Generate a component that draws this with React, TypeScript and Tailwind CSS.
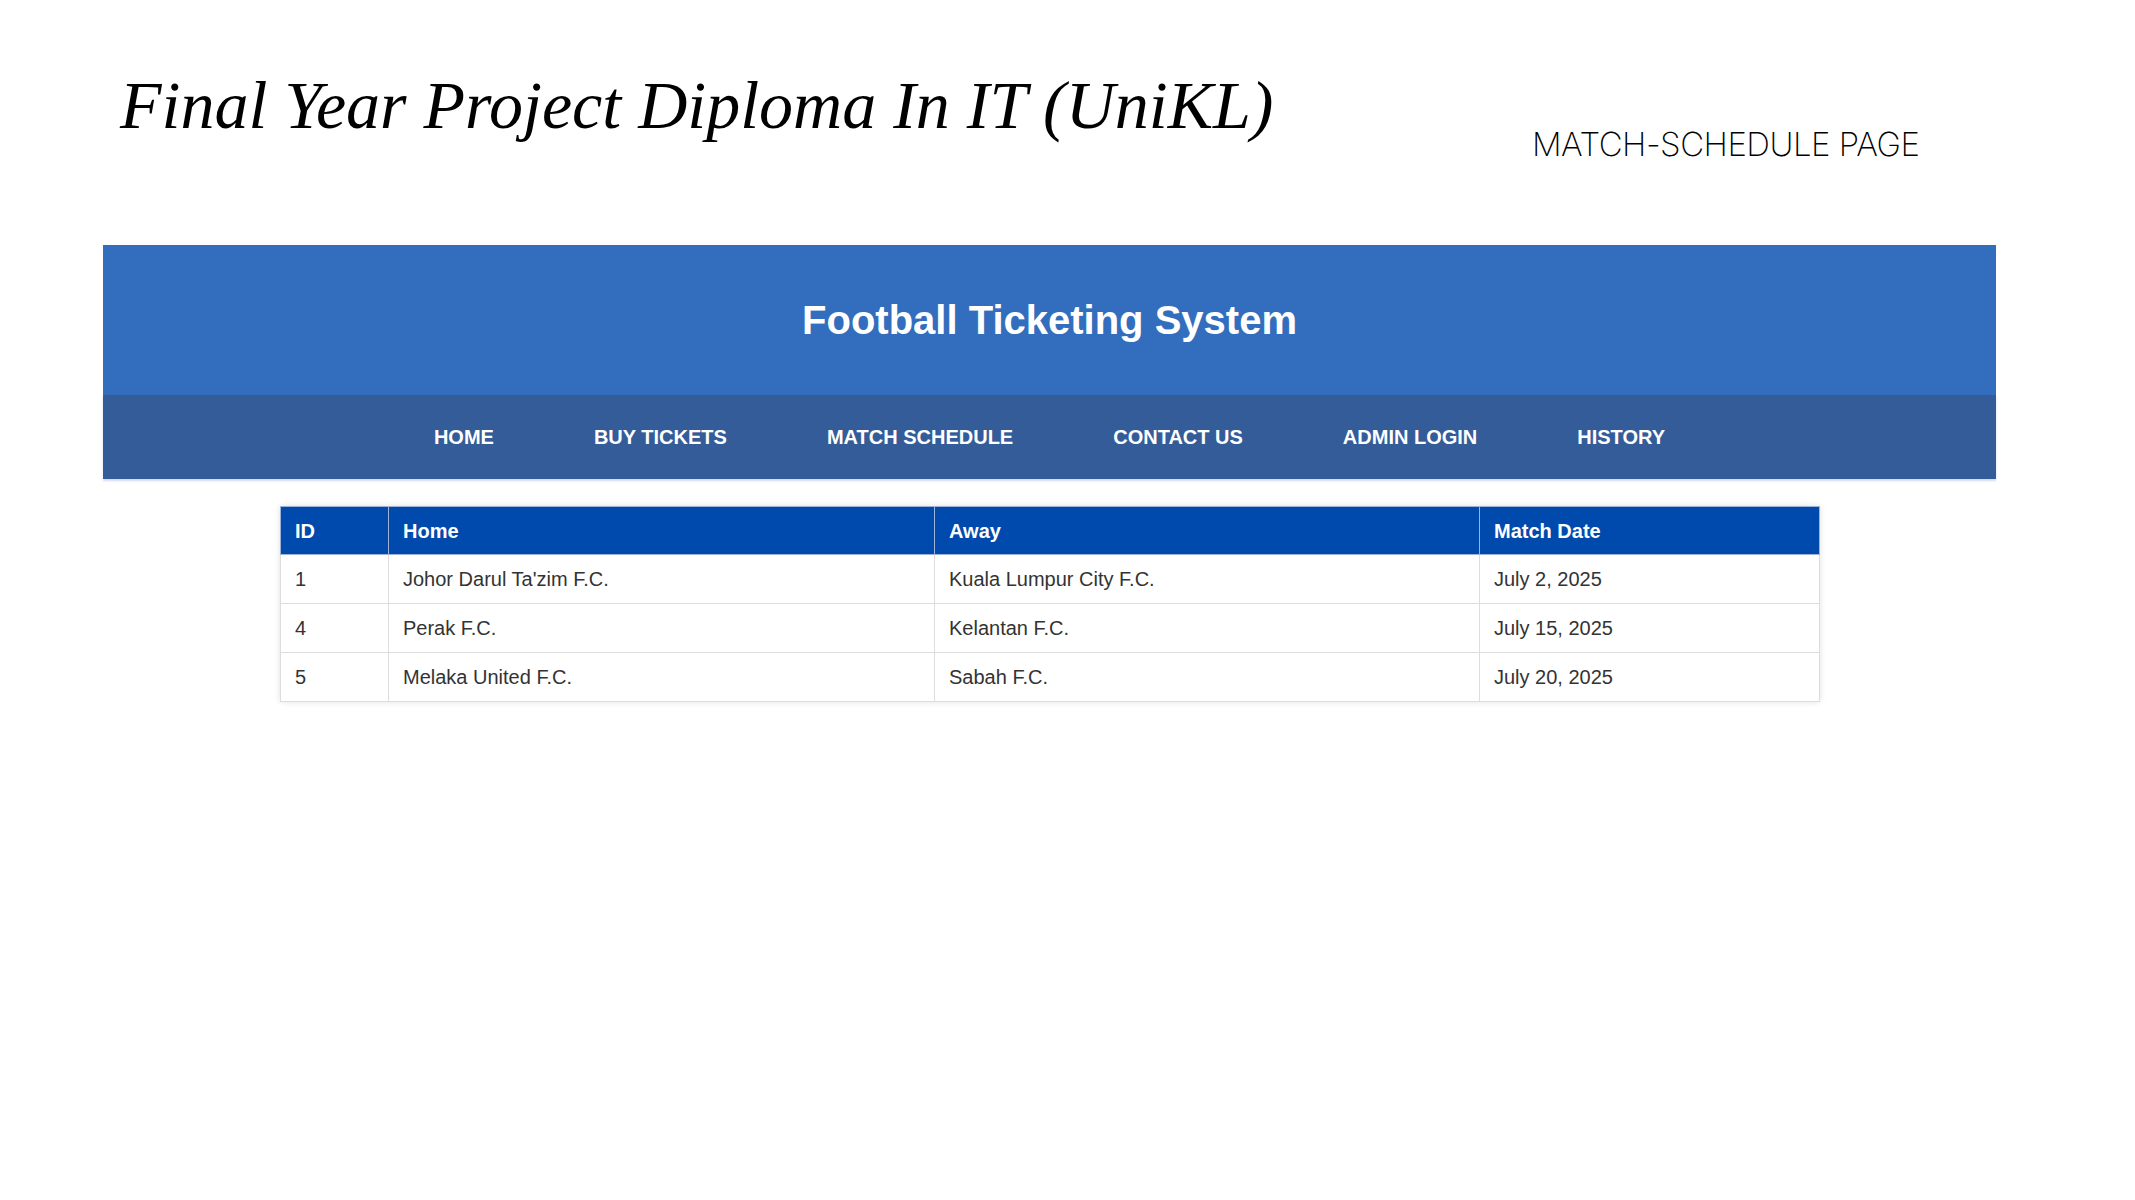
export default function App() {
  const navItems = ["HOME", "BUY TICKETS", "MATCH SCHEDULE", "CONTACT US", "ADMIN LOGIN", "HISTORY"];

  const matches = [
    { id: 1, home: "Johor Darul Ta'zim F.C.", away: "Kuala Lumpur City F.C.", date: "July 2, 2025" },
    { id: 4, home: "Perak F.C.", away: "Kelantan F.C.", date: "July 15, 2025" },
    { id: 5, home: "Melaka United F.C.", away: "Sabah F.C.", date: "July 20, 2025" },
  ];

  return (
    <div className="w-[2135px] h-[1200px] bg-white overflow-hidden">
      {/* Slide heading */}
      <div className="flex h-[245px] pl-[120px] pt-[71px]">
        <div className="w-[1412px]">
          <h1 className="font-['Liberation_Serif',serif] italic text-[68px] leading-[68px] text-black whitespace-nowrap">
            Final Year Project Diploma In IT (UniKL)
          </h1>
        </div>
        <div className="mt-[57px] font-['Inter',sans-serif] font-extralight text-[33px] leading-[33px] text-black whitespace-nowrap tracking-[-0.5px]">
          MATCH-SCHEDULE PAGE
        </div>
      </div>

      {/* Site header */}
      <div className="ml-[103px] w-[1893px] font-['Liberation_Sans',Arial,sans-serif]">
        <div className="h-[150px] bg-[#326ebd] flex items-center justify-center">
          <h2 className="text-white font-bold text-[40px] leading-none">Football Ticketing System</h2>
        </div>
        <nav className="h-[84px] bg-[#335c98] flex items-center justify-center gap-[100px] shadow-[0_2px_2px_rgba(120,150,200,0.35)]">
          {navItems.map((item) => (
            <a key={item} className="text-white font-bold text-[20px] leading-none whitespace-nowrap">
              {item}
            </a>
          ))}
        </nav>
      </div>

      {/* Match table */}
      <div className="ml-[280px] mt-[27px] w-[1540px] shadow-[0_0_6px_rgba(0,0,0,0.12)] font-['Liberation_Sans',Arial,sans-serif]">
        <table className="w-full border-collapse text-[20px]">
          <thead>
            <tr className="bg-[#004aad] text-white h-[48px]">
              <th className="w-[108px] border border-[#9fb3d6] px-[14px] text-left font-bold">ID</th>
              <th className="w-[546px] border border-[#9fb3d6] px-[14px] text-left font-bold">Home</th>
              <th className="w-[545px] border border-[#9fb3d6] px-[14px] text-left font-bold">Away</th>
              <th className="border border-[#9fb3d6] px-[14px] text-left font-bold">Match Date</th>
            </tr>
          </thead>
          <tbody className="text-[#333333]">
            {matches.map((m) => (
              <tr key={m.id} className="h-[49px] bg-white">
                <td className="border border-[#dddddd] px-[14px]">{m.id}</td>
                <td className="border border-[#dddddd] px-[14px]">{m.home}</td>
                <td className="border border-[#dddddd] px-[14px]">{m.away}</td>
                <td className="border border-[#dddddd] px-[14px]">{m.date}</td>
              </tr>
            ))}
          </tbody>
        </table>
      </div>
    </div>
  );
}
